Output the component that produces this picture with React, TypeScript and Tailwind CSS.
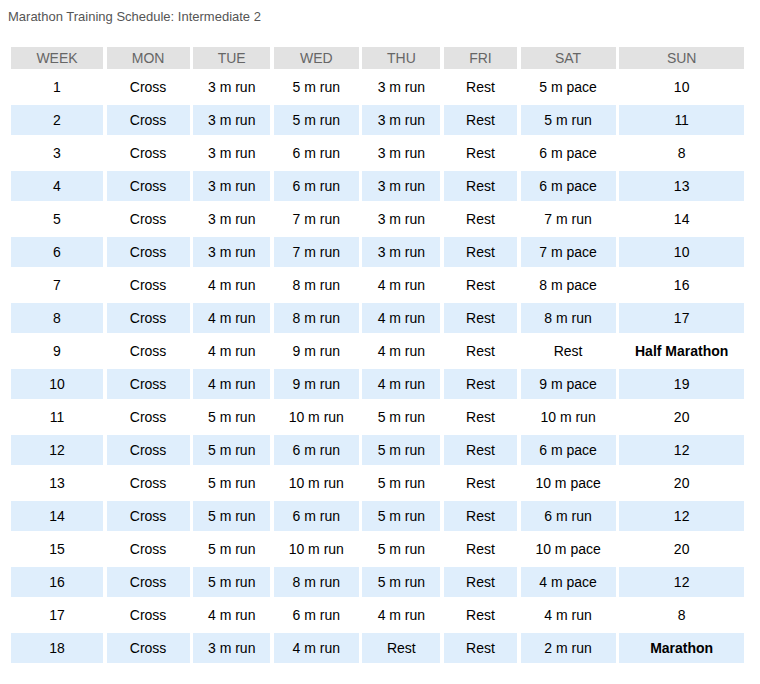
const rows = [
["1","Cross","3 m run","5 m run","3 m run","Rest","5 m pace","10"],
["2","Cross","3 m run","5 m run","3 m run","Rest","5 m run","11"],
["3","Cross","3 m run","6 m run","3 m run","Rest","6 m pace","8"],
["4","Cross","3 m run","6 m run","3 m run","Rest","6 m pace","13"],
["5","Cross","3 m run","7 m run","3 m run","Rest","7 m run","14"],
["6","Cross","3 m run","7 m run","3 m run","Rest","7 m pace","10"],
["7","Cross","4 m run","8 m run","4 m run","Rest","8 m pace","16"],
["8","Cross","4 m run","8 m run","4 m run","Rest","8 m run","17"],
["9","Cross","4 m run","9 m run","4 m run","Rest","Rest","Half Marathon"],
["10","Cross","4 m run","9 m run","4 m run","Rest","9 m pace","19"],
["11","Cross","5 m run","10 m run","5 m run","Rest","10 m run","20"],
["12","Cross","5 m run","6 m run","5 m run","Rest","6 m pace","12"],
["13","Cross","5 m run","10 m run","5 m run","Rest","10 m pace","20"],
["14","Cross","5 m run","6 m run","5 m run","Rest","6 m run","12"],
["15","Cross","5 m run","10 m run","5 m run","Rest","10 m pace","20"],
["16","Cross","5 m run","8 m run","5 m run","Rest","4 m pace","12"],
["17","Cross","4 m run","6 m run","4 m run","Rest","4 m run","8"],
["18","Cross","3 m run","4 m run","Rest","Rest","2 m run","Marathon"],
];
const heads=["WEEK","MON","TUE","WED","THU","FRI","SAT","SUN"];
export default function App(){
  return <div className="bg-white w-[760px] h-[684px] pt-[7px] pl-[8px]" style={{fontFamily:'"Liberation Sans", Arial, sans-serif'}}>
    <div className="text-[13px] text-[#555] h-[20px] leading-[20px]">Marathon Training Schedule: Intermediate 2</div>
    <div className="mt-[20px] ml-[3px] grid grid-cols-[92px_83px_77px_85px_78px_73px_95px_125px] gap-x-[3.6px] gap-y-[3px] text-[14px] text-black">
      {heads.map(h=><div key={h} className="bg-[#e2e2e2] text-[#666] h-[22px] flex items-center justify-center">{h}</div>)}
      {rows.map((r,i)=>r.map((c,j)=><div key={i+"-"+j} className={`h-[30px] flex items-center justify-center ${i%2?"bg-[#dfeefc]":""} ${c.includes("Marathon")?"font-bold":""}`}>{c}</div>))}
    </div>
  </div>
}
